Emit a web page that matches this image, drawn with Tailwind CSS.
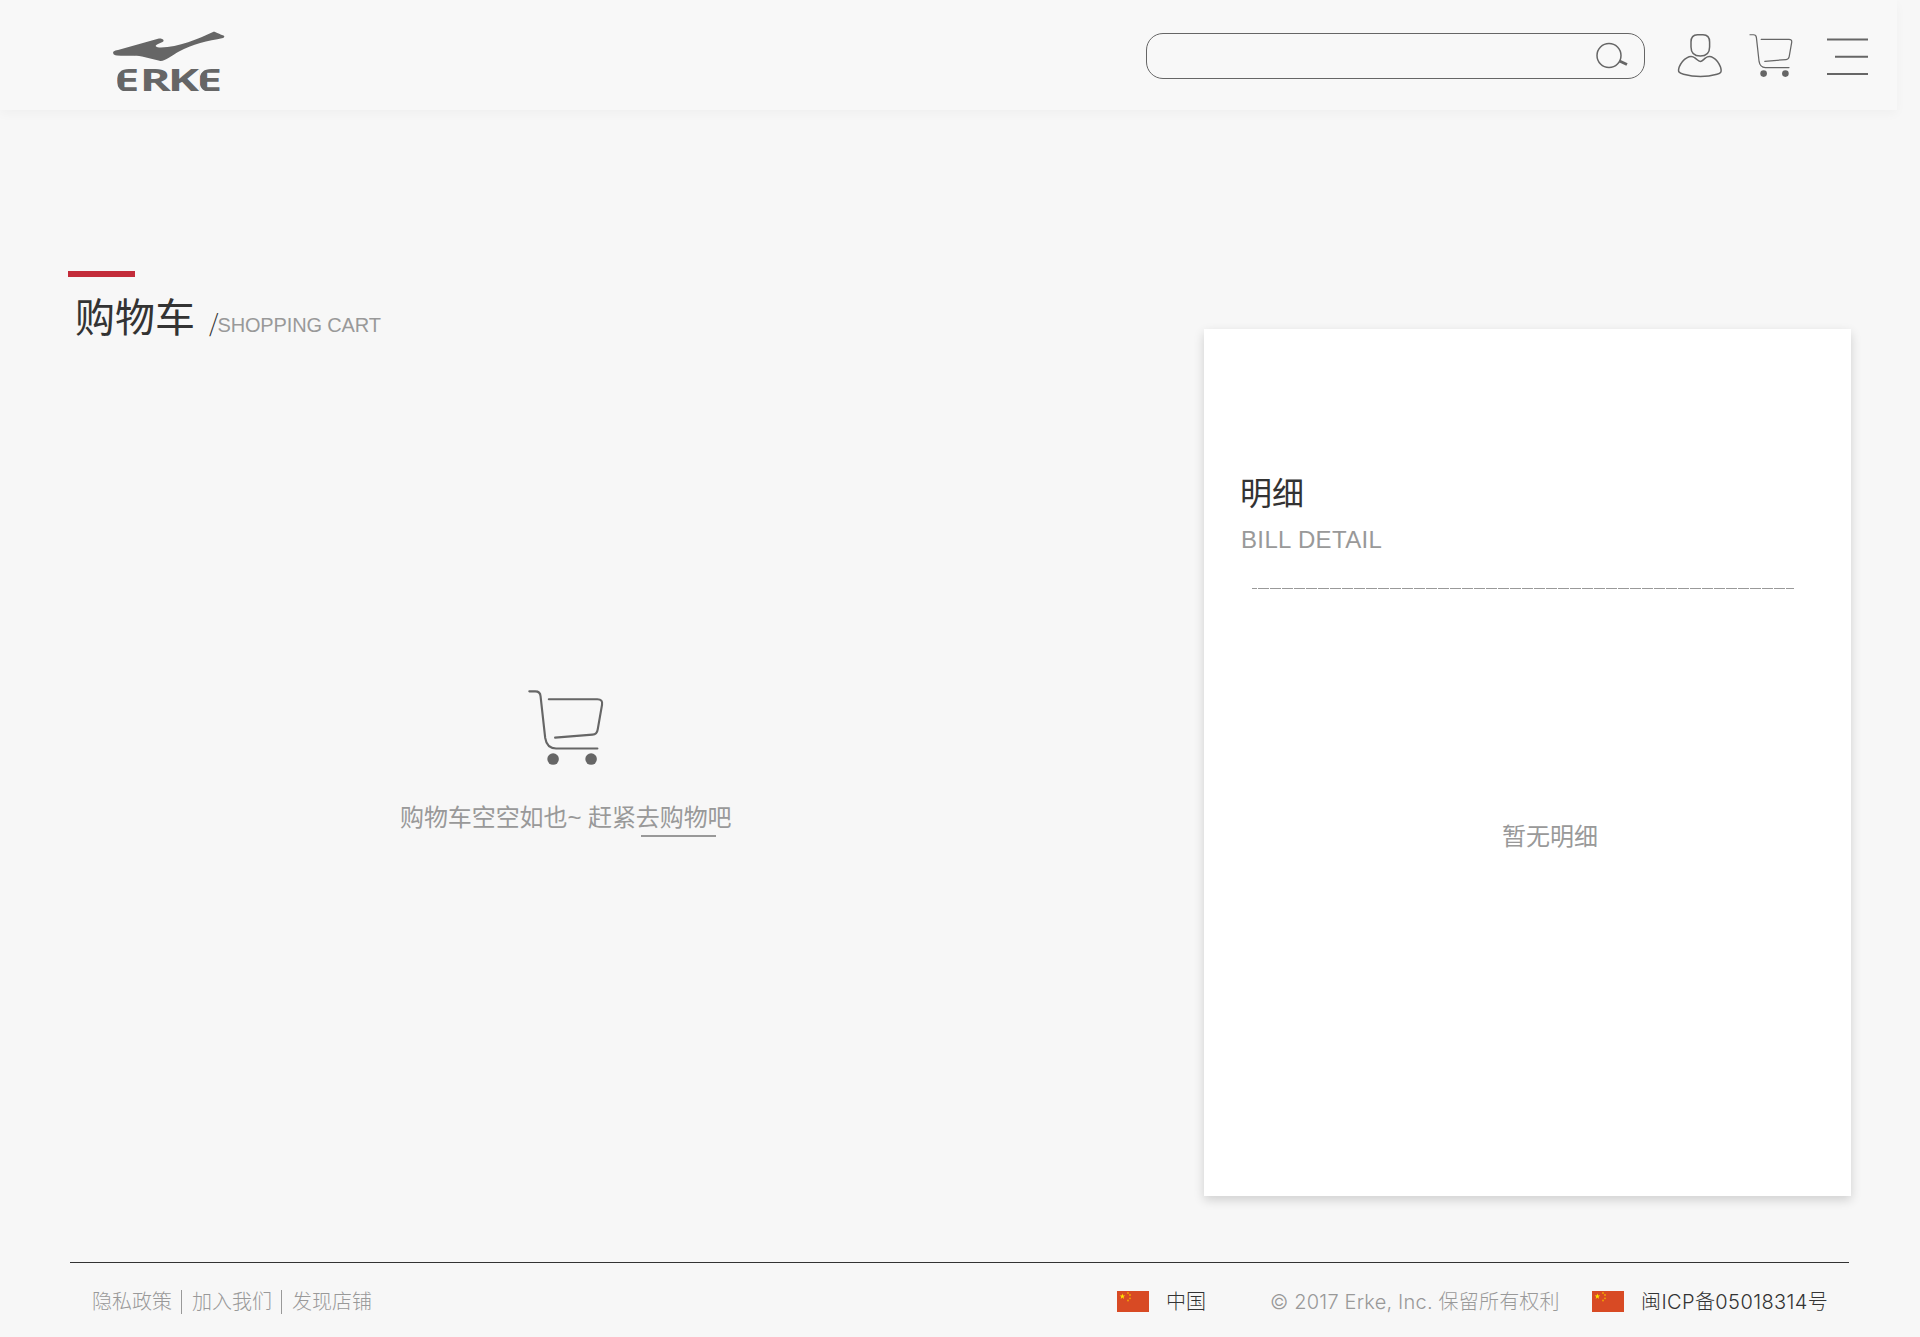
<!DOCTYPE html>
<html lang="zh-CN">
<head>
<meta charset="utf-8">
<title>购物车 - ERKE</title>
<script src="https://cdn.jsdelivr.net/npm/@tailwindcss/browser@4"></script>
</head>
<body class="flex h-[1337px] w-[1920px] flex-col overflow-hidden bg-[#f7f7f7] font-['Liberation_Sans','Noto_Sans_CJK_SC',sans-serif] text-[#333]">
<svg class="hidden">
  <symbol id="cart" viewBox="0 0 228 227">
    <g fill="none" stroke="#666" stroke-width="6.5" stroke-linecap="round">
      <path d="M3 4H21Q36 4 37 19L51 145Q56 177 84 177H209"/>
      <path d="M62 28H209Q226 28 223 45L210 119Q208 134 194 135L81 144"/>
    </g>
    <circle cx="75" cy="209" r="17.5" fill="#666"/><circle cx="190" cy="209" r="17.5" fill="#666"/>
  </symbol>
  <symbol id="flag" viewBox="0 0 32 21">
    <rect width="32" height="21" fill="#d84a24"/>
    <path fill="#ffe600" d="M5.4 2.6L6.1 4.6H8.2L6.5 5.8 7.1 7.9 5.4 6.6 3.7 7.9 4.3 5.8 2.6 4.6H4.7Z"/>
    <g fill="#f5a800"><circle cx="11" cy="2" r=".9"/><circle cx="13" cy="4" r=".9"/><circle cx="13" cy="7.3" r=".9"/><circle cx="11" cy="9.5" r=".9"/></g>
  </symbol>
</svg>
<header class="flex h-[110px] w-[1897px] shrink-0 items-start bg-[#f8f8f8] pl-[112px] shadow-[0_4px_10px_rgba(0,0,0,0.03)]">
  <svg class="mt-[30px] h-[72px] w-[114px]" viewBox="0 0 114 72" fill="#666">
    <defs>
      <!-- rounds the left side of both E letters -->
      <clipPath id="wordmark"><path d="M30 39V62H17Q5 62 5 50.500Q5 39 17 39ZM30 39H87.500V62H30ZM113 39V62H99.500Q87.500 62 87.500 50.500Q87.500 39 99.500 39Z"/></clipPath>
    </defs>
    <path d="M1.300 7C0.700 4.800 2 4.200 6 3.400L46 -7.800C50 -9 53.500 -6 50.500 -4.500L46 -2.500C42 -.8 43.500 1 49 1C66 1 87 -8 101 -14.500C103 -15.400 107 -12 111.500 -11C112.800 -10.500 112.500 -9 111 -8.500C96 -5.500 80 -2.500 67 5C59 9.500 52 15.500 47.500 14.200L30 10C20 8.500 14 10 5 9Q1.500 8.500 1.300 7Z" transform="translate(0 16.500)"/>
    <g clip-path="url(#wordmark)"><text transform="translate(0 61) scale(1.6 1)" x="0.6 17.3 34.8 52.3" y="0" font-family="Open Sans" font-weight="700" font-size="29.500">ERKE</text></g>
  </svg>
  <div class="mt-[33px] ml-[920px] flex h-[46px] w-[499px] justify-end rounded-[17px] border border-[#666] pr-[16px]">
    <svg class="mt-[8px] h-7 w-8" viewBox="0 0 32 28" fill="none" stroke="#666"><circle cx="13" cy="13.500" r="12" stroke-width="1.500"/><path d="M23.500 19L31 22.500" stroke-width="2.800"/></svg>
  </div>
  <svg class="mt-[33px] ml-[32px] h-[45px] w-[46px]" viewBox="0 0 46 45" fill="none" stroke="#666" stroke-width="1.500">
    <path d="M20.500 1.700H26Q32.600 1.700 32.600 9V14Q32.600 23 23.300 23Q14 23 14 14V9Q14 1.700 20.500 1.700Z"/>
    <path d="M18 25C20 26.300 21.200 28.500 23.300 28.500C25.300 28.500 26.500 26.300 28.500 25C33 21.500 40 25 43.500 34C45 39 44 40 40 41.200C30 44 17 44 6.500 41.200C2 40 .5 39 2.200 34C6 25 13.500 21.500 18 25Z"/>
  </svg>
  <svg class="mt-[34px] ml-[26px] h-[43px] w-[44px]"><use href="#cart"/></svg>
  <svg class="mt-[34px] ml-[34px] h-[44px] w-[41px]" viewBox="0 0 41 44" stroke="#666" stroke-width="2"><path d="M0 5.500H41M8 22.800H41M0 40H41"/></svg>
</header>
<main class="flex h-[1152px] shrink-0 items-start">
  <section class="w-[1204px] pt-[161px]">
    <div class="ml-[68px] h-[6px] w-[67px] bg-[#c32c3a]"></div>
    <h1 class="ml-[75px] mt-[11px] flex items-baseline text-[40px] leading-[60px]">购物车<span class="ml-[14px] text-[24px] font-light font-['Noto_Sans_CJK_SC']">/</span><span class="-ml-px text-[20px] tracking-[-0.15px] text-[#999]">SHOPPING CART</span></h1>
    <div class="mt-[335px] flex flex-col items-start">
      <svg class="ml-[528px] h-[75px] w-[76px]"><use href="#cart"/></svg>
      <p class="relative ml-[400px] mt-[35px] text-[24px] leading-[36px] tracking-[-0.08px] whitespace-nowrap text-[#999]">购物车空空如也~ 赶紧去购物吧<span class="absolute top-[35px] left-[241px] h-[2px] w-[75px] bg-[#999]"></span></p>
    </div>
  </section>
  <aside class="mt-[219px] h-[867px] w-[647px] bg-white pt-[141px] shadow-[0_4px_10px_rgba(0,0,0,0.16)]">
    <h2 class="ml-[36px] text-[32px] leading-[48px]">明细</h2>
    <p class="ml-[37px] mt-[4px] text-[24px] leading-[36px] tracking-[0.35px] whitespace-nowrap text-[#999]">BILL DETAIL</p>
    <div class="ml-[48px] mt-[30px] h-px w-[542px] bg-[repeating-linear-gradient(90deg,#999_0_11px,transparent_11px_12px)] bg-[position:-6px_0] bg-[size:1200px_1px]"></div>
    <p class="ml-[298px] mt-[230px] text-[24px] leading-[36px] text-[#999]">暂无明细</p>
  </aside>
</main>
<footer class="ml-[70px] flex h-[75px] w-[1779px] items-start border-t border-[#333] pt-[24px] text-[20px] font-light leading-[30px] whitespace-nowrap font-['Inter','Noto_Sans_CJK_SC',sans-serif]">
  <nav class="ml-[22px] flex w-[1025px] items-center text-[#999]">
    <span class="w-[89px]">隐私政策</span><span class="h-6 w-px bg-[#999]"></span>
    <span class="ml-[10px] w-[89px]">加入我们</span><span class="h-6 w-px bg-[#999]"></span>
    <span class="ml-[10px]">发现店铺</span>
  </nav>
  <svg class="mt-[4px] h-[21px] w-8"><use href="#flag"/></svg>
  <span class="ml-[17px] w-[104px]">中国</span>
  <span class="w-[322px] tracking-[0.2px] text-[#999]">© 2017 Erke, Inc. 保留所有权利</span>
  <svg class="mt-[4px] h-[21px] w-8"><use href="#flag"/></svg>
  <span class="ml-[17px] tracking-[0.4px]">闽ICP备05018314号</span>
</footer>
</body>
</html>
